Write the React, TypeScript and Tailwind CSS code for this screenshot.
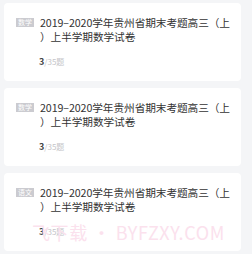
const items = [
  { tag: '数学', lines: ['2019–2020学年贵州省期末考题高三（上', '）上半学期数学试卷'], done: 3, total: 35 },
  { tag: '数学', lines: ['2019–2020学年贵州省期末考题高三（上', '）上半学期数学试卷'], done: 3, total: 35 },
  { tag: '语文', lines: ['2019–2020学年贵州省期末考题高三（上', '）上半学期数学试卷'], done: 3, total: 35 },
]

export default function App() {
  return (
    <div
      className="w-[252px] h-[254px] overflow-hidden bg-[#f4f5f7] pl-1 pt-[3px] flex flex-col gap-[7px]"
      style={{ fontFamily: '"Noto Sans CJK SC", "Noto Sans", sans-serif' }}
    >
      {items.map((it, idx) => (
        <div key={idx} className="relative w-[237px] h-[78px] shrink-0 rounded bg-white pl-3 pt-[13px]">
          <div className="flex items-start">
            <span className="mt-[2px] shrink-0 bg-[#cbcbd0] px-[2px] text-[7px] leading-[9px] text-white">
              {it.tag}
            </span>
            <p className="ml-[6px] text-[10.7px] leading-[14px] tracking-[-0.1px] text-[#333] whitespace-nowrap">
              {it.lines.map((l, i) => (
                <span key={i} className="block">
                  {l}
                </span>
              ))}
            </p>
          </div>
          <div className="mt-3 ml-[23px] text-[9px] leading-[12px]">
            <span className="font-semibold text-[#444]">{it.done}</span>
            <span className="text-[8px] text-[#c4c4c8]">/{it.total}题</span>
          </div>
          {idx === 2 && (
            <div className="pointer-events-none absolute left-[28px] top-[49px] text-[18px] leading-[20px] tracking-[0.6px] text-[#fbe1ed] whitespace-nowrap">
              飞下载 • BYFZXY.COM
            </div>
          )}
        </div>
      ))}
    </div>
  )
}
